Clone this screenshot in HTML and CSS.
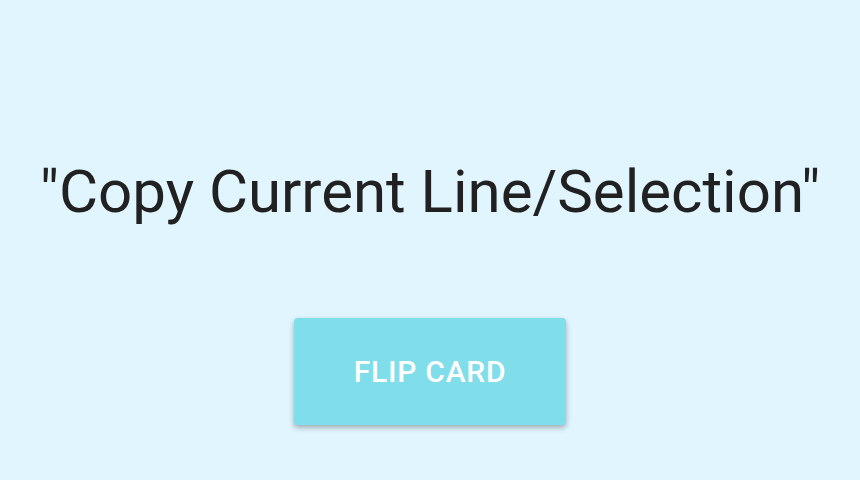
FILE: index.html
```html
<!DOCTYPE html>
<html>
<head>
<meta charset="utf-8">
<link rel="stylesheet" href="styles.css">
</head>
<body>
<main class="card">
  <h1 class="term">"Copy Current Line/Selection"</h1>
  <button class="flip">FLIP CARD</button>
</main>
</body>
</html>
```
FILE: styles.css
```css
html, body {
  margin: 0;
  padding: 0;
  width: 860px;
  height: 480px;
  background: #e1f5fe;
  font-family: Roboto, "Noto Sans", sans-serif;
  overflow: hidden;
}
.card {
  display: flex;
  flex-direction: column;
  align-items: center;
  padding-top: 156px;
}
.term {
  margin: 0;
  font-weight: 400;
  font-size: 60px;
  line-height: 72px;
  color: #212121;
  white-space: nowrap;
}
.flip {
  margin-top: 90px;
  width: 272px;
  height: 107px;
  border: none;
  border-radius: 4px;
  background: #80deea;
  color: #ffffff;
  font-family: Roboto, sans-serif;
  font-weight: 500;
  font-size: 30px;
  letter-spacing: 0.75px;
  box-shadow: 0 3px 6px rgba(0,0,0,0.2), 0 2px 4px rgba(0,0,0,0.12);
}
```
